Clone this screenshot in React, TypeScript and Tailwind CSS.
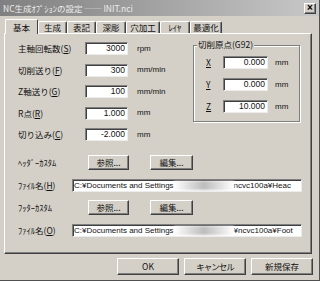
import React from "react";

const TABS = [
  { label: "基本", w: "w-[33px]", active: true },
  { label: "生成", w: "w-[29px]" },
  { label: "表記", w: "w-[29px]" },
  { label: "深彫", w: "w-[30px]" },
  { label: "穴加工", w: "w-[34px]" },
  { label: "ﾚｲﾔ", w: "w-[30px]" },
  { label: "最適化", w: "w-[32px]" },
];

const LEFT_ROWS = [
  { label: "主軸回転数", key: "S", value: "3000", unit: "rpm" },
  { label: "切削送り", key: "F", value: "300", unit: "mm/min" },
  { label: "Z軸送り", key: "G", value: "100", unit: "mm/min" },
  { label: "R点", key: "R", value: "1.000", unit: "mm" },
  { label: "切り込み", key: "C", value: "-2.000", unit: "mm" },
];

const ORIGIN = [
  { axis: "X", value: "0.000" },
  { axis: "Y", value: "0.000" },
  { axis: "Z", value: "10.000" },
];

const sunken =
  "bg-white border border-t-[#808080] border-l-[#808080] border-r-[#ececec] border-b-[#ececec] shadow-[inset_1px_1px_0_#404040]";
const raised =
  "bg-[#d4d0c8] border border-t-white border-l-white border-r-[#404040] border-b-[#404040] shadow-[inset_-1px_-1px_0_#808080]";

function Btn({ label, className }: { label: string; className: string }) {
  return (
    <div className={`${raised} ${className} flex items-center justify-center text-[8.5px] leading-none text-[#111]`}>
      {label}
    </div>
  );
}

function FileField({ tail }: { tail: string }) {
  return (
    <div className={`${sunken} w-[230px] h-[13px] flex items-center overflow-hidden pl-[1px] font-['Liberation_Sans','Noto_Sans_CJK_JP',sans-serif] text-[8px] leading-none text-[#111] whitespace-nowrap`}>
      <span>C:¥Documents and Settings</span>
      <div className="w-[60px] h-[9px] shrink-0 bg-linear-to-r from-white via-[#bdbdbd] to-white blur-[1px]" />
      <span>{tail}</span>
    </div>
  );
}

export default function App() {
  return (
    <div className="w-[320px] h-[281px] bg-[#d4d0c8] flex flex-col font-['Noto_Sans_CJK_JP',sans-serif] text-[#111] overflow-hidden border-r border-b border-[#505050]">
      {/* title bar */}
      <div className="h-[16px] shrink-0 flex items-center justify-between pl-[3px] pr-[3px] bg-linear-to-r from-[#808080] to-[#c8c8c8]">
        <span className="text-[8.5px] leading-none text-[#ececec] whitespace-nowrap">
          NC生成ｵﾌﾟｼｮﾝの設定 ── INIT.nci
        </span>
        <div className={`${raised} w-[12px] h-[11px] flex items-center justify-center text-[10px] leading-none font-bold font-['Liberation_Sans',sans-serif] text-black`}>
          ×
        </div>
      </div>

      {/* tabs */}
      <div className="h-[14px] mt-[3px] ml-[5px] flex items-end">
        {TABS.map((t) =>
          t.active ? (
            <div
              key={t.label}
              className={`${t.w} relative z-10 -mb-[1px] h-[15px] bg-[#d4d0c8] border-l border-t border-r border-t-white border-l-white border-r-[#404040] rounded-t-[2px] flex items-center justify-center text-[8.5px] leading-none`}
            >
              {t.label}
            </div>
          ) : (
            <div
              key={t.label}
              className={`${t.w} h-[12px] border-l border-t border-r border-t-white border-l-white border-r-[#404040] shadow-[inset_-1px_0_0_#808080] rounded-t-[2px] flex items-center justify-center text-[8.5px] leading-none`}
            >
              {t.label}
            </div>
          )
        )}
      </div>

      {/* tab panel */}
      <div className={`${raised} ml-[4px] w-[308px] h-[221px] shrink-0 flex flex-col pl-[13px] pt-[8px]`}>
        <div className="flex">
          {/* left fields */}
          <div className="w-[175px] flex flex-col gap-[8.5px]">
            {LEFT_ROWS.map((r) => (
              <div key={r.key} className="h-[13px] flex items-center text-[8.5px] leading-none">
                <span className="w-[67px] whitespace-nowrap">
                  {r.label}(<u>{r.key}</u>)
                </span>
                <div className={`${sunken} w-[43px] h-[13px] flex items-center justify-end pr-[2px] font-['Liberation_Sans',sans-serif] text-[8.5px]`}>
                  {r.value}
                </div>
                <span className="ml-[9px] font-['Liberation_Sans',sans-serif] text-[8px] whitespace-nowrap">{r.unit}</span>
              </div>
            ))}
          </div>

          {/* origin group */}
          <div className="relative mt-[3px] w-[107px] h-[77px] border border-[#808080] shadow-[inset_1px_1px_0_#fff,1px_1px_0_#fff] flex flex-col gap-[9px] pt-[10px] pl-[12px]">
            <span className="absolute -top-[6px] left-[3px] px-[1px] bg-[#d4d0c8] text-[8.5px] leading-none whitespace-nowrap">
              切削原点(G92)
            </span>
            {ORIGIN.map((o) => (
              <div key={o.axis} className="h-[13px] flex items-center text-[8.5px] leading-none">
                <span className="w-[17px]">
                  <u>{o.axis}</u>
                </span>
                <div className={`${sunken} w-[45px] h-[13px] flex items-center justify-end pr-[2px] font-['Liberation_Sans',sans-serif] text-[8.5px]`}>
                  {o.value}
                </div>
                <span className="ml-[7px] font-['Liberation_Sans',sans-serif] text-[8px]">mm</span>
              </div>
            ))}
          </div>
        </div>

        {/* header custom */}
        <div className="mt-[14px] h-[15px] flex items-center text-[8.5px] leading-none">
          <span className="w-[70px] whitespace-nowrap">ﾍｯﾀﾞｰｶｽﾀﾑ</span>
          <Btn label="参照..." className="w-[41px] h-[15px]" />
          <Btn label="編集..." className="ml-[21px] w-[43px] h-[15px]" />
        </div>
        <div className="mt-[9px] h-[13px] flex items-center text-[8.5px] leading-none">
          <span className="w-[54px] whitespace-nowrap">
            ﾌｧｲﾙ名(<u>H</u>)
          </span>
          <FileField tail="ncvc100a¥Heac" />
        </div>

        {/* footer custom */}
        <div className="mt-[8px] h-[15px] flex items-center text-[8.5px] leading-none">
          <span className="w-[70px] whitespace-nowrap">ﾌｯﾀｰｶｽﾀﾑ</span>
          <Btn label="参照..." className="w-[41px] h-[15px]" />
          <Btn label="編集..." className="ml-[21px] w-[43px] h-[15px]" />
        </div>
        <div className="mt-[9px] h-[13px] flex items-center text-[8.5px] leading-none">
          <span className="w-[54px] whitespace-nowrap">
            ﾌｧｲﾙ名(<u>O</u>)
          </span>
          <FileField tail="¥ncvc100a¥Foot" />
        </div>
      </div>

      {/* dialog buttons */}
      <div className="mt-[4px] flex justify-end gap-[5px] pr-[6px]">
        <Btn label="OK" className="w-[62px] h-[17px]" />
        <Btn label="キャンセル" className="w-[62px] h-[17px] tracking-[-1px]" />
        <Btn label="新規保存" className="w-[62px] h-[17px]" />
      </div>
    </div>
  );
}
